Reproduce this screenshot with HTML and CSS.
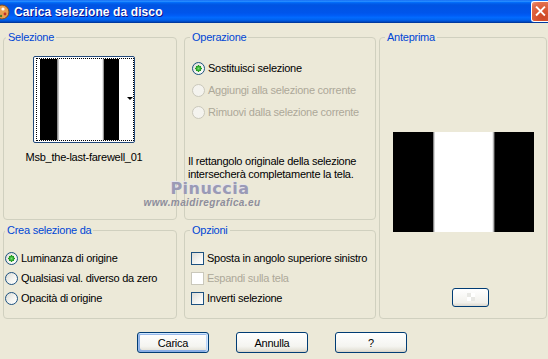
FILE: index.html
```html
<!DOCTYPE html>
<html lang="it">
<head>
<meta charset="utf-8">
<title>Carica selezione da disco</title>
<link rel="stylesheet" href="styles.css">
</head>
<body>
<div class="window">
  <div class="titlebar">
    <span class="app-icon">
      <svg width="10" height="18" viewBox="0 0 10 18">
        <ellipse cx="2" cy="9" rx="7" ry="7" fill="#E8A050" stroke="#7A4A1E" stroke-width="1"/>
        <circle cx="3" cy="6" r="1.6" fill="#fff"/>
        <circle cx="5" cy="11" r="1.4" fill="#C0302A"/>
        <circle cx="1" cy="13" r="1.2" fill="#4A7A2A"/>
      </svg>
    </span>
    <span class="title">Carica selezione da disco</span>
    <span class="close">
      <svg width="17" height="19" viewBox="0 0 17 19">
        <path d="M5 5 L13 13 M13 5 L5 13" stroke="#fff" stroke-width="2" stroke-linecap="square"/>
      </svg>
    </span>
  </div>

  <div class="client">
    <div class="groups">
      <fieldset class="group g-sel">
        <legend class="lg-left">Selezione</legend>
        <div class="sel-body">
          <div class="thumb">
            <div class="thumb-focus">
              <div class="thumb-img"><span class="thumb-arrow"></span></div>
            </div>
          </div>
          <div class="caption">Msb_the-last-farewell_01</div>
        </div>
      </fieldset>

      <fieldset class="group g-op">
        <legend>Operazione</legend>
        <div class="list op-list">
          <div class="opt opt22"><span class="radio checked"></span><span>Sostituisci selezione</span></div>
          <div class="opt opt22 disabled"><span class="radio"></span><span>Aggiungi alla selezione corrente</span></div>
          <div class="opt opt22 disabled"><span class="radio"></span><span>Rimuovi dalla selezione corrente</span></div>
        </div>
        <p class="op-note">Il rettangolo originale della selezione<br>intersecherà completamente la tela.</p>
      </fieldset>

      <fieldset class="group g-prev">
        <legend>Anteprima</legend>
        <div class="prev-body">
          <div class="preview"></div>
          <div class="mini-btn"></div>
        </div>
      </fieldset>

      <fieldset class="group g-crea">
        <legend class="lg-left2">Crea selezione da</legend>
        <div class="list crea-list">
          <div class="opt"><span class="radio checked"></span><span>Luminanza di origine</span></div>
          <div class="opt"><span class="radio"></span><span>Qualsiasi val. diverso da zero</span></div>
          <div class="opt"><span class="radio"></span><span>Opacità di origine</span></div>
        </div>
      </fieldset>

      <fieldset class="group g-opz">
        <legend>Opzioni</legend>
        <div class="list opz-list">
          <div class="opt"><span class="check"></span><span>Sposta in angolo superiore sinistro</span></div>
          <div class="opt disabled"><span class="check"></span><span>Espandi sulla tela</span></div>
          <div class="opt"><span class="check"></span><span>Inverti selezione</span></div>
        </div>
      </fieldset>
    </div>

    <div class="buttons">
      <button class="btn default">Carica</button>
      <button class="btn">Annulla</button>
      <button class="btn">?</button>
    </div>

    <div class="watermark">
      <span class="wm-name">Pinuccia</span>
      <span class="wm-url">www.maidiregrafica.eu</span>
    </div>
  </div>
</div>
</body>
</html>
```

FILE: styles.css
```css
* { box-sizing: border-box; }

html, body {
  margin: 0;
  padding: 0;
}

body {
  width: 548px;
  height: 359px;
  overflow: hidden;
  background: #ECE9D8;
  font-family: "Liberation Sans", Arial, sans-serif;
  font-size: 11px;
  letter-spacing: -0.25px;
  color: #000;
}

.window {
  width: 548px;
  height: 359px;
  display: flex;
  flex-direction: column;
}

/* ---------- title bar ---------- */
.titlebar {
  height: 23px;
  flex: none;
  display: flex;
  align-items: center;
  background: linear-gradient(#0058ee 0%, #3593ff 4%, #288eff 6%, #127dff 8%, #036ffc 10%, #0262ee 14%, #0057e5 20%, #0054e3 24%, #0055eb 56%, #005bf5 66%, #026afe 76%, #0062ef 86%, #0052d6 92%, #0040ab 96%, #003092 100%);
}

.app-icon {
  width: 10px;
  height: 18px;
  flex: none;
  display: flex;
}

.title {
  margin-left: 4px;
  color: #fff;
  font-weight: bold;
  font-size: 12px;
  letter-spacing: 0.1px;
  text-shadow: 1px 1px #0F1089;
}

.close {
  margin-left: auto;
  align-self: flex-start;
  margin-top: 1px;
  width: 17px;
  height: 21px;
  border: 1px solid #fff;
  border-right: none;
  border-radius: 3px 0 0 3px;
  background: radial-gradient(circle at 70% 80%, #CC4626 0%, #D8532F 35%, #E27150 80%, #F0A48C 100%);
  display: flex;
}

/* ---------- client ---------- */
.client {
  position: relative;
  flex: 1;
  padding: 8px 0 0 3px;
}

.groups {
  display: grid;
  grid-template-columns: 174px 7px 192px 3px 168px;
  grid-template-rows: 189px 95px;
  row-gap: 4px;
}

.group {
  margin: 0;
  padding: 0;
  min-width: 0;
  border: 1px solid #D0D0BF;
  border-radius: 4px;
}

.group legend {
  padding: 0 2px;
  margin-left: 5px;
  color: #0046D5;
  line-height: 13px;
}

.group legend.lg-left { margin-left: 2px; }
.group legend.lg-left2 { margin-left: 1px; }

.g-sel  { grid-column: 1; grid-row: 1; }
.g-op   { grid-column: 3; grid-row: 1; }
.g-prev { grid-column: 5; grid-row: 1 / span 2; }
.g-crea { grid-column: 1; grid-row: 2; }
.g-opz  { grid-column: 3; grid-row: 2; }

/* ---------- Selezione ---------- */
.sel-body {
  width: 102px;
  margin: 12px 0 0 29px;
  display: flex;
  flex-direction: column;
  align-items: center;
}

.thumb {
  width: 102px;
  height: 87px;
  border: 1px solid #21487A;
  border-radius: 2px;
  background: #fff;
  padding: 1px;
}

.thumb-focus {
  width: 98px;
  height: 83px;
  border: 1px dotted #000;
  margin-left: 1px;
  display: flex;
}

.thumb-img {
  position: relative;
  flex: 1;
  background: linear-gradient(to right,
    #fff 0px, #fff 3px,
    #000 3px, #000 20px,
    #777 20px, #ddd 22px, #fff 22px,
    #fff 65px, #ccc 66px, #666 67px,
    #000 67px, #000 82px,
    #fff 82px, #fff 100%);
}

.thumb-arrow {
  position: absolute;
  left: 90px;
  top: 38px;
  width: 0;
  height: 0;
  border-left: 3px solid transparent;
  border-right: 3px solid transparent;
  border-top: 3px solid #000;
}

.caption {
  margin-top: 8px;
  line-height: 13px;
  white-space: nowrap;
}

/* ---------- lists ---------- */
.list {
  display: flex;
  flex-direction: column;
}

.opt {
  height: 20px;
  display: flex;
  align-items: center;
  gap: 3px;
  white-space: nowrap;
}

.opt22 { height: 22px; }

.opt.disabled { color: #ACA899; }

.op-list   { margin-top: 13px; padding-left: 7px; }
.crea-list { margin-top: 11px; padding-left: 1px; }
.opz-list  { margin-top: 11px; padding-left: 6px; }

.op-note {
  margin: 32px 0 0 3px;
  line-height: 13px;
}

.radio {
  flex: none;
  width: 13px;
  height: 13px;
  border-radius: 50%;
  border: 1px solid #1C5180;
  background: linear-gradient(135deg, #DCDCD7 0%, #F5F5F2 60%, #FFFFFF 100%);
}

.radio.checked {
  background:
    radial-gradient(circle at 50% 50%, #7BE27A 0px, #2EAA2C 2px, #1E941E 3px, transparent 3.2px),
    linear-gradient(135deg, #DCDCD7 0%, #F5F5F2 60%, #FFFFFF 100%);
}

.disabled .radio {
  border-color: #CAC8BB;
  background: #F4F3EE;
}

.check {
  flex: none;
  width: 13px;
  height: 13px;
  border: 1px solid #1C5180;
  background: linear-gradient(135deg, #DCDCD7 0%, #F5F5F2 60%, #FFFFFF 100%);
}

.disabled .check {
  border-color: #CAC8BB;
  background: #FFFFFF;
}

/* ---------- Anteprima ---------- */
.prev-body {
  display: flex;
  flex-direction: column;
  align-items: center;
}

.preview {
  margin-top: 88px;
  width: 141px;
  height: 100px;
  background: linear-gradient(to right,
    #000 0px, #000 40px,
    #555 40px, #bbb 41px, #eee 42px, #fff 42px,
    #fff 99px, #ddd 100px, #888 101px, #000 102px,
    #000 100%);
}

.mini-btn {
  margin: 56px 0 0 14px;
  width: 37px;
  height: 19px;
  border: 1px solid #003C74;
  border-radius: 3px;
  background:
    conic-gradient(#ffffff 25%, #E8E8E4 0 50%, #ffffff 0 75%, #E8E8E4 0) 14px 4px / 8px 8px no-repeat,
    linear-gradient(#FFFFFF, #F2F1EC 80%, #DCD8CE);
}

/* ---------- buttons ---------- */
.buttons {
  display: flex;
  gap: 27px;
  margin: 13px 0 0 134px;
}

.btn {
  width: 72px;
  height: 21px;
  padding: 0;
  border: 1px solid #003C74;
  border-radius: 3px;
  background: linear-gradient(#FFFFFF 0%, #F4F4F0 70%, #E6E4DA 90%, #D6D0C5 100%);
  font: inherit;
  letter-spacing: inherit;
  color: #000;
}

.btn.default {
  box-shadow: inset -1px 1px #CEE7FF, inset 1px 2px #98B8EA, inset -2px 0 #BCD4F6, inset 1px -1px #89ADE4, inset 2px -2px #89ADE4;
}

/* ---------- watermark ---------- */
.watermark {
  position: absolute;
  left: 140px;
  top: 157px;
  width: 124px;
  display: flex;
  flex-direction: column;
  align-items: center;
  pointer-events: none;
}

.wm-name {
  margin-left: 16px;
  font-family: "DejaVu Sans", sans-serif;
  font-weight: bold;
  font-size: 16px;
  letter-spacing: 0.5px;
  line-height: 17px;
  color: #9A9AB6;
  text-shadow: -1px -1px 0 #E4E4EE;
}

.wm-url {
  margin-top: 0;
  font-family: "Liberation Sans", Arial, sans-serif;
  font-style: italic;
  font-weight: bold;
  font-size: 10px;
  letter-spacing: 0.4px;
  line-height: 12px;
  color: #8E8E9C;
}
```
